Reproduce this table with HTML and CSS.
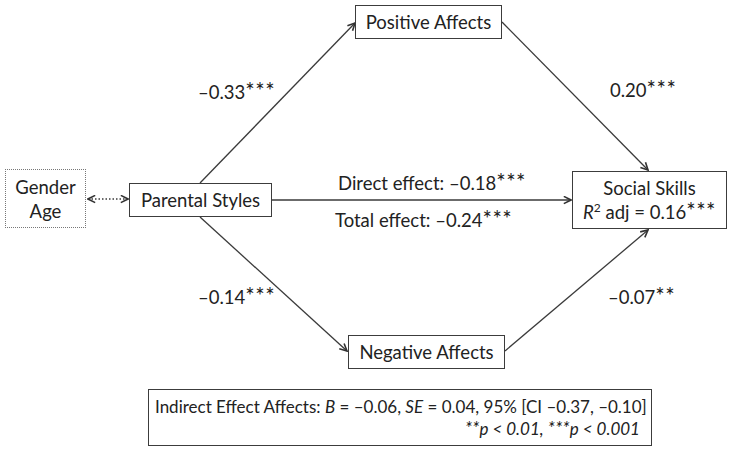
FILE: index.html
```html
<!DOCTYPE html>
<html>
<head>
<meta charset="utf-8">
<link rel="stylesheet" href="styles.css">
</head>
<body>
<div class="canvas">
  <svg class="edges" width="732" height="453" viewBox="0 0 732 453">
    <defs>
      <marker id="arr" viewBox="0 0 10 10" refX="9" refY="5" markerWidth="9" markerHeight="9" markerUnits="userSpaceOnUse" orient="auto-start-reverse">
        <path d="M1,1 L9,5 L1,9" fill="none" stroke="#333" stroke-width="1.8"/>
      </marker>
    </defs>
    <g stroke="#3a3a3a" stroke-width="1.3" fill="none">
      <line x1="200" y1="183" x2="355" y2="23" marker-end="url(#arr)"/>
      <line x1="502" y1="22" x2="648" y2="170" marker-end="url(#arr)"/>
      <line x1="272" y1="200" x2="571" y2="200" marker-end="url(#arr)"/>
      <line x1="200" y1="217" x2="347" y2="351" marker-end="url(#arr)"/>
      <line x1="505" y1="351" x2="648" y2="230" marker-end="url(#arr)"/>
      <line x1="88" y1="199" x2="128" y2="199" stroke-dasharray="1.5 2" marker-start="url(#arr)" marker-end="url(#arr)"/>
    </g>
  </svg>

  <div class="node pos-affects">Positive Affects</div>
  <div class="node neg-affects">Negative Affects</div>
  <div class="node parental">Parental Styles</div>
  <div class="node covars"><span>Gender</span><span>Age</span></div>
  <div class="node social"><span>Social Skills</span><span><i>R</i><sup>2</sup> adj = 0.16<span class="sig">***</span></span></div>

  <div class="label l-033">–0.33<span class="sig">***</span></div>
  <div class="label l-020">0.20<span class="sig">***</span></div>
  <div class="label l-014">–0.14<span class="sig">***</span></div>
  <div class="label l-007">–0.07<span class="sig">**</span></div>
  <div class="label l-direct">Direct effect: –0.18<span class="sig">***</span></div>
  <div class="label l-total">Total effect: –0.24<span class="sig">***</span></div>

  <div class="node note">
    <div class="note-line1">Indirect Effect Affects: <i>B</i> = –0.06, <i>SE</i> = 0.04, 95% [CI –0.37, –0.10]</div>
    <div class="note-line2"><i><span class="sig-s">**</span>p &lt; 0.01, <span class="sig-s">***</span>p &lt; 0.001</i></div>
  </div>
</div>
</body>
</html>
```

FILE: styles.css
```css
html, body {
  margin: 0;
  padding: 0;
  background: #ffffff;
}

.canvas {
  position: relative;
  width: 732px;
  height: 453px;
  overflow: hidden;
  font-family: Lato, "Open Sans", sans-serif;
  font-size: 18.5px;
  color: #222;
}

.edges {
  position: absolute;
  left: 0;
  top: 0;
}

.node {
  position: absolute;
  box-sizing: border-box;
  border: 1.5px solid #3c3c3c;
  background: #fff;
  display: flex;
  flex-direction: column;
  align-items: center;
  justify-content: center;
  line-height: 24px;
  white-space: nowrap;
}

.sig {
  font-size: 1.2em;
  line-height: 0;
  letter-spacing: 0.5px;
}

.sig-s {
  font-size: 1.1em;
  line-height: 0;
}

.pos-affects { left: 355px; top: 5px; width: 147px; height: 34px; }
.neg-affects { left: 348px; top: 335px; width: 157px; height: 34px; }
.parental { left: 129px; top: 183px; width: 143px; height: 34px; }
.covars {
  left: 5px; top: 169px; width: 81px; height: 59px;
  border: 1.5px dotted #777;
}
.social { left: 572px; top: 171px; width: 155px; height: 58px; }
.social sup { font-size: 12px; line-height: 0; vertical-align: 7px; }

.note {
  left: 148px; top: 389px; width: 504px; height: 57px;
  align-items: stretch;
  padding: 0 6px;
  line-height: 22px;
  font-size: 17px;
}
.note-line1 { text-align: left; }
.note-line2 { text-align: right; padding-right: 5px; }

.label {
  position: absolute;
  white-space: nowrap;
  line-height: 20px;
}
.l-033 { left: 198px; top: 82px; }
.l-020 { left: 610px; top: 80px; }
.l-014 { left: 198px; top: 287px; }
.l-007 { left: 608px; top: 287px; }
.l-direct { left: 338px; top: 173px; }
.l-total { left: 335px; top: 210px; }
```
